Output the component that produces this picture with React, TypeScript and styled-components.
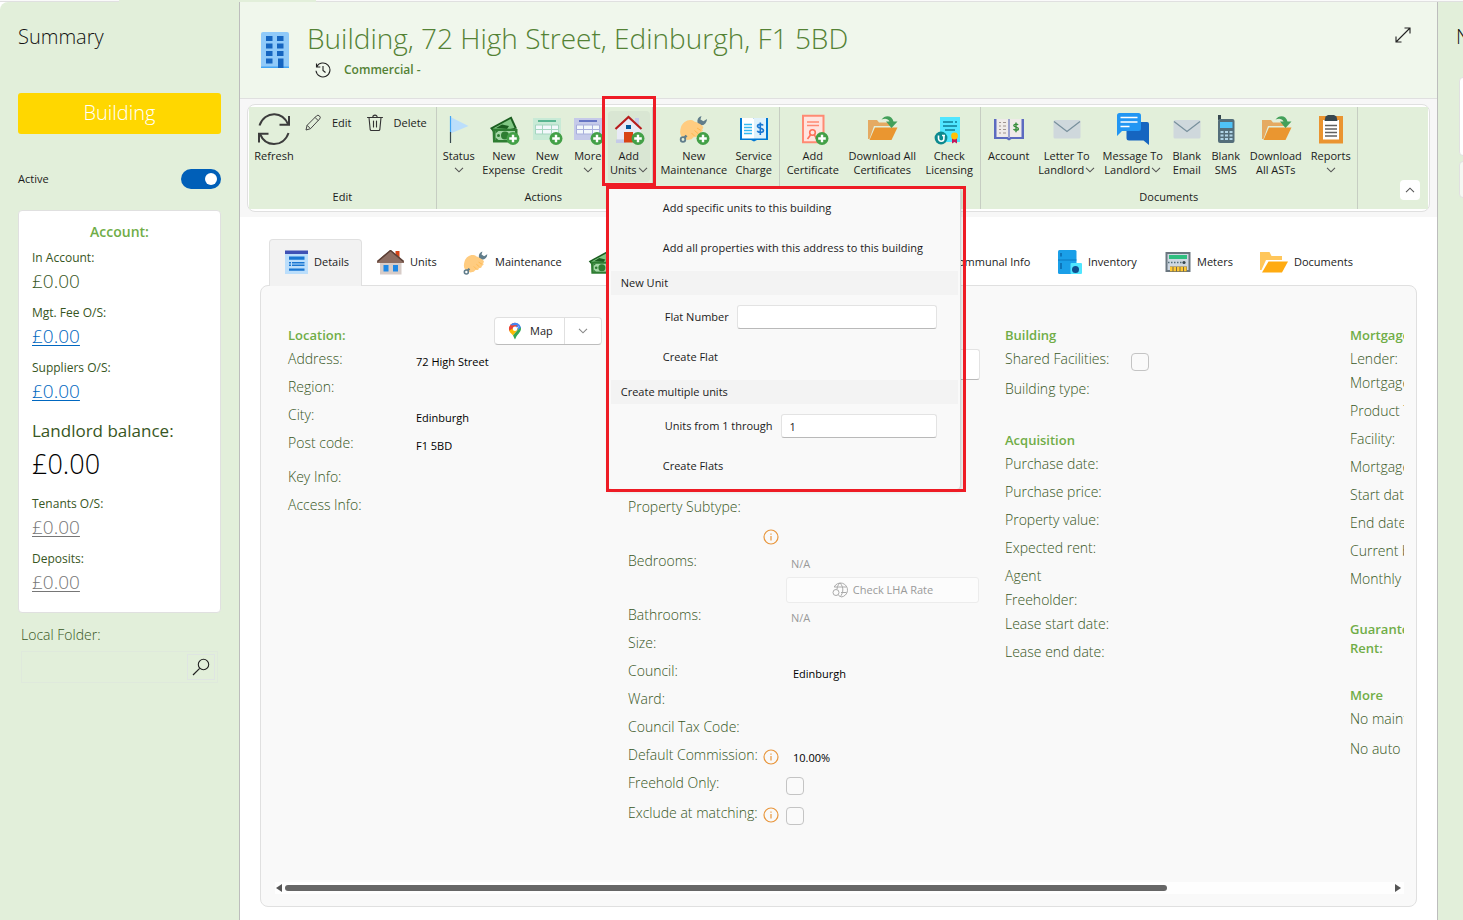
import React, { ReactNode } from 'react';
import styled, { createGlobalStyle, css } from 'styled-components';

const color = {
  pane: '#e2efda',
  header: '#f0f7ec',
  line: '#e0e0e0',
  divider: '#bdbdbd',
  text: '#1b1b1b',
  label: '#375623',
  heading: '#70ad47',
  title: '#548235',
  muted: '#9a9a9a',
  panel: '#f9f9f9',
  marker: '#ee1c25',
};

const GlobalStyle = createGlobalStyle`
  *, *::before, *::after { box-sizing: border-box; }
  body {
    margin: 0;
    background: #fff;
    color: ${color.text};
    font-family: 'Open Sans', 'Noto Sans', sans-serif;
    font-size: 11px;
    line-height: 14px;
  }
  button, input { font: inherit; color: inherit; }
  h1, h2, h3, p, dl, dd, dt { margin: 0; }
`;

/* ---------- icons ---------- */

const Svg = ({ size = 32, box = 32, children }: { size?: number; box?: number; children: ReactNode }) => (
  <svg width={size} height={size} viewBox={`0 0 ${box} ${box}`} fill="none" aria-hidden="true">
    {children}
  </svg>
);

const Chevron = ({ up = false, tone = '#555' }: { up?: boolean; tone?: string }) => (
  <svg width="10" height="6" viewBox="0 0 10 6" fill="none" aria-hidden="true">
    <path d={up ? 'M1 5.2 5 1.2l4 4' : 'M1 .8l4 4 4-4'} stroke={tone} strokeWidth="1.1" />
  </svg>
);

const Plus = () => (
  <g>
    <circle cx="25" cy="25.500" r="6.500" fill="#43a047" />
    <path d="M25 21.700v7.600M21.200 25.500h7.600" stroke="#fff" strokeWidth="2.400" />
  </g>
);

const RefreshIcon = () => (
  <Svg>
    <g stroke="#3c3c3c" strokeWidth="2">
      <path d="M1.500 12.500C4 5 10 1 16.500 1.200 22.500 1.400 27.500 5.500 30 11" />
      <path d="M31 3v8.800h-9.500" />
      <path d="M30.500 20C28 27.500 22 31 16 31 9.500 31 4.500 27 2 21" />
      <path d="M1 29.500V20.800h9.500" />
    </g>
  </Svg>
);

const PencilIcon = () => (
  <Svg size={18} box={18}>
    <path d="M2 16l1.100-4.700L12.400 2a2.100 2.100 0 0 1 3.100 0 2.100 2.100 0 0 1 0 3.100L6.500 14.700 2 16ZM11 3.400l3.300 3.300M3.100 11.300l3.300 3.300" stroke="#444" strokeWidth="1" strokeLinejoin="round" />
  </Svg>
);

const BinIcon = () => (
  <Svg size={18} box={18}>
    <path d="M1.500 3.500h15M3 3.500l1.200 12.200a1 1 0 0 0 1 .8h7.600a1 1 0 0 0 1-.8L15 3.500M6.800 3.300a2.200 2.200 0 0 1 4.400 0M7.500 7v6M10.500 7v6" stroke="#333" strokeWidth="1.100" strokeLinecap="round" />
  </Svg>
);

const FlagIcon = () => (
  <Svg>
    <path d="M7.500 4l18 9-18 7.500Z" fill="#bbdefb" />
    <path d="M7.500 3v16" stroke="#42a5f5" strokeWidth="1.200" />
    <path d="M7.500 19v11" stroke="#37474f" strokeWidth="1.200" />
  </Svg>
);

const Notes = () => (
  <g>
    <path d="M2 15 23.500 3.500l5.500 12L6 20Z" fill="#1b5e20" />
    <path d="M5 15.500 22.500 6l4 9L8 19Z" fill="#81c784" />
    <path d="M8 15l6-3.500 7 1.500-2 3Z" fill="#1b5e20" />
    <path d="M4.500 15.500 29.500 16v13.500H5Z" fill="#2e7d32" />
    <path d="M7.500 18h19.500v9H7.500Z" fill="#a5d6a7" />
    <circle cx="17" cy="22.500" r="4" fill="#2e7d32" />
    <circle cx="10.500" cy="22.500" r="1.500" fill="#2e7d32" />
    <circle cx="24" cy="22.500" r="1.500" fill="#2e7d32" />
    <path d="M7.500 18h3l-3 2.500ZM7.500 27h3l-3-2.500Z" fill="#2e7d32" />
  </g>
);

const ExpenseIcon = () => (
  <Svg>
    <Notes />
    <Plus />
  </Svg>
);

const MoneyIcon = () => (
  <Svg size={28}>
    <Notes />
  </Svg>
);

const FormIcon = ({ back, fore, edge }: { back: string; fore: string; edge: string }) => (
  <Svg>
    <path d="M2 5h28v22H2Z" fill={back} />
    <path d="M7 8h18" stroke={fore} strokeWidth="1.800" />
    <path d="M4.500 12h23v9h-23Z" fill="#f3f8fb" stroke={edge} />
    <path d="M4.500 16.500h23M11.500 12v9M20.500 12v9" stroke={edge} />
    <Plus />
  </Svg>
);

const AddUnitsIcon = () => (
  <Svg>
    <path d="M22 5h4v8h-4Z" fill="#c5cae9" />
    <path d="M4 15 15.500 5 28 15v11.500H4Z" fill="#e8eaf6" />
    <path d="M3 26.500h10V30H3Z" fill="#c5cae9" />
    <path d="M11 19h9v10.500h-9Z" fill="#d84315" />
    <path d="M13 12h5v4h-5Z" fill="#01579b" />
    <path d="M2.500 16 15.500 4l13 12" stroke="#b71c1c" strokeWidth="2.200" />
    <Plus />
  </Svg>
);

const HandWrench = () => (
  <g>
    <path d="M23.500 3a6 6 0 0 0-4 6.800l-3.500 4 3.500 2.700 3.500-4.200a6 6 0 0 0 6-6.300l-3.600 2.200-3-1.800Z" fill="#607d8b" />
    <path d="M3 14C4.500 9.500 9 6.500 13 7c2.500.2 3 1.800 5 2l3 1.500c3 1.500 5 3.500 4 5l-1 .5 1 1.500-2 2-1 2-2.500.5-1 2-3 .2-2 2-4 .8-6-3.500C1.500 20.500 2 17.500 3 14Z" fill="#ffcc80" />
    <path d="M19 15l4 2.500M16.500 17.500l3.500 3M13.500 20l3 3" stroke="#ffb74d" strokeWidth="1" />
    <circle cx="5" cy="26.500" r="2.300" stroke="#607d8b" strokeWidth="1.800" />
    <path d="M6.500 24.800 8.500 22.500" stroke="#607d8b" strokeWidth="2.500" />
  </g>
);

const NewMaintenanceIcon = () => (
  <Svg>
    <HandWrench />
    <Plus />
  </Svg>
);

const ServiceChargeIcon = () => (
  <Svg>
    <path d="M2 5h28v22H19l-3 1.500L13 27H2Z" fill="#0078d4" />
    <path d="M4 5h11c1 0 1 1 1 1v19.500H4Z" fill="#fff" />
    <path d="M16 5h12v20.500H16Z" fill="#dff1fb" />
    <path d="M6 11.500h8M6 14.500h8M6 17.500h8M6 20.500h8" stroke="#35b8f1" strokeWidth="1.400" />
    <path d="M25 12.500c-.5-1.500-5.500-1.700-5.500.8 0 2.500 6 1.400 6 4.200 0 2.500-5.500 2.500-6.200.2M22.300 9.500v12.500" stroke="#1976d2" strokeWidth="1.600" />
  </Svg>
);

const CertificateIcon = () => (
  <Svg>
    <path d="M6 2.800h20.500v26.400H6Z" fill="#ffe4df" stroke="#ff8a73" strokeWidth="2" />
    <path d="M10 9h12M10 12.500h12" stroke="#ff8a73" strokeWidth="1.600" />
    <circle cx="15.500" cy="19.500" r="2.800" stroke="#ff7058" strokeWidth="1.600" />
    <path d="M13.500 22l-3 4M17.500 22l2 4" stroke="#ff7058" strokeWidth="1.600" />
    <Plus />
  </Svg>
);

const DownloadFolderIcon = () => (
  <Svg>
    <path d="M2 7h9l2 2.500h12V13H8L3.500 26 2 26Z" fill="#e5aa62" />
    <path d="M9 14.500h22.500L25.500 27H3.500Z" fill="#ea9630" />
    <path d="M15.500 6.500C19 1.500 26 2 27.500 8.500h4L25.500 15 20 8.500h3.500C22 5.500 19 5 15.500 6.500Z" fill="#43a05a" />
  </Svg>
);

const LicensingIcon = () => (
  <Svg>
    <path d="M7 4h20v25H7Z" fill="#50e6ff" />
    <path d="M10 9h10M22 9h2M10 13h14M12 17h10" stroke="#0f7d97" strokeWidth="1.400" />
    <circle cx="8" cy="25" r="6.400" fill="#0d8a8f" />
    <path d="M5.500 22.500v3a2.700 2.700 0 0 0 5.400 0V22M9 22.500h3" stroke="#fff" strokeWidth="1.600" />
    <path d="M19 24h5v6.500l-2.500-1.500-2.500 1.500Z" fill="#c2185b" />
    <circle cx="21.500" cy="23" r="3.400" fill="#ffc107" />
  </Svg>
);

const AccountIcon = () => (
  <Svg>
    <path d="M1 6h3v18h24V6h3v20H18.500L16 27.500 13.500 26H1Z" fill="#5c6bc0" />
    <path d="M3.500 6H15v18H3.500ZM17 6h11.500v18H17Z" fill="#efebe9" />
    <path d="M15 6h2v19h-2Z" fill="#9aa0cf" />
    <path d="M6 9.500h2M10 9.500h3M6 13h2M10 13h3M6 16.500h2M10 16.500h3M6 20h2M10 20h3" stroke="#a09490" strokeWidth="1.200" />
    <path d="M25 12c-.5-1.300-4.200-1.300-4.200.6 0 2 4.600 1 4.600 3.100 0 2-4.200 1.900-4.800.2M23 9.500v9.700" stroke="#388e3c" strokeWidth="1.400" />
  </Svg>
);

const EnvelopeIcon = () => (
  <Svg>
    <rect x="2.500" y="7" width="27" height="18.500" rx="1.500" fill="#cfd8dc" />
    <path d="M3 8.500 16 18.500l13-10" stroke="#78909c" strokeWidth="1.300" />
  </Svg>
);

const MessageIcon = () => (
  <Svg>
    <path d="M12 9h18a2 2 0 0 1 2 2v21l-5.500-4.500H12a2.500 2.500 0 0 1-2.500-2.500V11Z" fill="#1565c0" />
    <path d="M2.500 0h19A2.500 2.500 0 0 1 24 2.500v13a2.500 2.500 0 0 1-2.500 2.500H5l-5 5V2.500A2.500 2.500 0 0 1 2.500 0Z" fill="#2196f3" />
    <path d="M3.500 4.500h17M3.500 9h17M3.500 13.500h9" stroke="#fff" strokeWidth="1.600" />
  </Svg>
);

const PhoneIcon = () => (
  <Svg>
    <path d="M8 2h3v5H8Z" fill="#37474f" />
    <rect x="8" y="6" width="16.500" height="24" rx="2" fill="#546e7a" />
    <path d="M10 9h12.500v6H10Z" fill="#4fc3f7" />
    <path d="M10.500 19h12M10.500 22.500h12M10.500 26h12" stroke="#b0d4e6" strokeWidth="1.900" strokeDasharray="3 1.500" />
  </Svg>
);

const ReportsIcon = () => (
  <Svg>
    <path d="M4 3h24v27.500H4Z" fill="#ea9430" />
    <path d="M8 7h16v19.500H8Z" fill="#fff" />
    <path d="M10.500 3.500 13 2h6l2.500 1.500 1 4.500h-13Z" fill="#37474f" />
    <path d="M10 12.500h12M10 16h12M10 19.500h12M10 23h12" stroke="#616161" strokeWidth="1.500" />
  </Svg>
);

const BuildingIcon = () => (
  <svg width="28" height="36" viewBox="0 0 28 36" aria-hidden="true">
    <rect x="0" y="0" width="28" height="36" rx="2" fill="#90caf9" />
    <path d="M0 34.500h28V36H0Z" fill="#42a5f5" />
    <path d="M5 4h6.500v5H5ZM16 4h6.500v5H16ZM5 11.500h6.500v5H5ZM16 11.500h6.500v5H16ZM5 19h6.500v5H5ZM16 19h6.500v5H16ZM5 26.500h6.500v5H5ZM17 26.500h5.500V36H17Z" fill="#1565c0" />
  </svg>
);

const HistoryIcon = () => (
  <Svg size={16} box={16}>
    <path d="M1.500 1.500V5h3.800M1.700 4.800A7 7 0 1 1 1 8.800M8 4v4.500l2.500 2" stroke="#222" strokeWidth="1.100" />
  </Svg>
);

const ExpandIcon = () => (
  <Svg size={16} box={16}>
    <path d="M1 15 15 1M9.500 1H15v5.500M1 9.500V15h5.500" stroke="#222" strokeWidth="1.100" />
  </Svg>
);

const SearchIcon = () => (
  <Svg size={18} box={18}>
    <circle cx="11.500" cy="6.500" r="5.200" stroke="#222" strokeWidth="1.100" />
    <path d="M7.700 10.300 1 17" stroke="#222" strokeWidth="1.200" />
  </Svg>
);

const DetailsIcon = () => (
  <Svg size={24} box={24}>
    <path d="M1 1h23v23H1Z" fill="#bbdefb" />
    <path d="M1 .500h23V4H1Z" fill="#3f51b5" />
    <path d="M5 6.500h15.500v3.300H5ZM5 12h2v1.500H5ZM8 12h12.500v1.500H8ZM5 14.500h2V16H5ZM8 14.500h12.500V16H8ZM5 18.500h15.500v2.200H5Z" fill="#1976d2" />
  </Svg>
);

const UnitsIcon = () => (
  <Svg size={27} box={27}>
    <path d="M18.500 2h4v7h-4Z" fill="#d84315" />
    <path d="M3 12 13.500 3 24.500 12v13.500H3Z" fill="#d7ccc8" />
    <path d="M13.500 1 0 12v2h27v-2Z" fill="#8d6e63" />
    <path d="M13.500 1.500 .5 12.500M13.500 1.500l13 11" stroke="#5d4037" strokeWidth="1.600" />
    <path d="M6.500 16h5v6.500h-5ZM16 16h5v6.500h-5Z" fill="#1e88e5" />
  </Svg>
);

const MaintenanceIcon = () => (
  <Svg size={27} box={31}>
    <HandWrench />
  </Svg>
);

const InventoryIcon = () => (
  <Svg size={24} box={24}>
    <rect x="0" y="0" width="18.500" height="24" rx="1.500" fill="#1a9fe8" />
    <path d="M0 10h18.500" stroke="#0a78c0" />
    <path d="M3 3v3.500M3 13v6" stroke="#055a9c" strokeWidth="1.200" />
    <rect x="12.500" y="13" width="11.500" height="11" rx="1" fill="#50e6ff" />
    <circle cx="17.500" cy="19.500" r="3.500" fill="#0f4f8f" />
  </Svg>
);

const MetersIcon = () => (
  <Svg size={26} box={26}>
    <path d="M.5 3h25v20H.5Z" fill="#6b7780" />
    <path d="M2.500 5h21v16h-21Z" fill="#cfd8e2" />
    <path d="M4 6h18v4H4Z" fill="#2fbf80" />
    <path d="M3 13.500h14" stroke="#546e7a" strokeWidth="1.400" strokeDasharray="1.500 1.500" />
    <circle cx="19" cy="13.500" r="1.600" fill="#37474f" />
    <path d="M5 17.500h17v5H5Z" fill="#7b6a45" />
    <path d="M5 20h17" stroke="#ffc933" strokeWidth="4.500" strokeDasharray="2.500 1" />
  </Svg>
);

const DocumentsIcon = () => (
  <Svg size={28} box={28}>
    <path d="M0 4h9.500l2 4H22v4H6L1.500 22H0Z" fill="#ffc65a" />
    <path d="M8.500 13.500H28L22 24.500H2Z" fill="#ffab12" />
  </Svg>
);

const MapPinIcon = () => (
  <Svg size={18} box={18}>
    <path d="M9 .8a6 6 0 0 0-6 6c0 .6 0 1.300.3 1.900L12 2Z" fill="#ea4335" />
    <path d="M4.500 2.700A6 6 0 0 1 13.700 3L9.500 7.500Z" fill="#4285f4" />
    <path d="M3.100 5.500c-.4 2 .2 3.500 1.400 5l7-7.500-7 .5Z" fill="#ea4335" />
    <path d="M3.300 8.500c.6 2 2.400 3.400 3.700 5l6-7-4-1Z" fill="#fbbc04" />
    <path d="M14.600 4.500c1.200 3.500-.6 5.500-2.500 7.700C10.500 14 9.900 15.500 9 17.500c-.9-1.500-1.200-2.800-2-4Z" fill="#34a853" />
    <path d="M13.300 2.600a6 6 0 0 1 1.500 3.200L11 8.500Z" fill="#4285f4" />
    <circle cx="9" cy="6.700" r="2.200" fill="#fff" />
  </Svg>
);

const GlobeSearchIcon = () => (
  <Svg size={16} box={16}>
    <path d="M2.200 5A7 7 0 1 1 9 15M8 1C5.500 3 5 6 5.100 7M8 1c4 4 3.500 10 0 14M2.200 5h12M9 10.500h5.500" stroke="#aaa" strokeWidth="1" />
    <circle cx="4" cy="10.500" r="3" stroke="#aaa" />
    <path d="M6.200 12.700 8.500 15" stroke="#aaa" />
  </Svg>
);

const InfoIcon = () => (
  <Svg size={16} box={16}>
    <circle cx="8" cy="8" r="7" stroke="#e8963c" strokeWidth="1.200" />
    <path d="M8 7v4.500M8 4.500v1.300" stroke="#e8963c" strokeWidth="1.200" />
  </Svg>
);

/* ---------- page frame ---------- */

const Page = styled.div`
  display: flex;
  flex-direction: column;
  min-height: 100vh;
`;

const TabStrip = styled.div`
  display: grid;
  grid-template-columns: 119px 197px 1fr;
  height: 2px;
  background: #fafafa;
`;

const StripCell = styled.div<{ $active?: boolean }>`
  background: ${(p) => (p.$active ? color.pane : 'transparent')};
  border-bottom: 1px solid ${(p) => (p.$active ? color.pane : color.line)};
`;

const Body = styled.div`
  flex: 1;
  display: grid;
  grid-template-columns: 240px minmax(0, 1fr) 26px;
`;

/* ---------- summary pane ---------- */

const Summary = styled.aside`
  display: flex;
  flex-direction: column;
  padding: 20px 18px 0;
  background: ${color.pane};
  border-right: 1px solid ${color.divider};
  border-top-left-radius: 8px;
`;

const PaneTitle = styled.h2`
  font-size: 20px;
  line-height: 30px;
  font-weight: 300;
  color: #111;
`;

const TypeButton = styled.button`
  height: 41px;
  margin-top: 41px;
  padding: 0 0 2px;
  border: 0;
  border-radius: 3px;
  background: #ffd700;
  color: #fff;
  font-size: 20px;
  line-height: 30px;
  font-weight: 300;
`;

const ActiveRow = styled.label`
  display: flex;
  align-items: center;
  justify-content: space-between;
  height: 20px;
  margin-top: 35px;
`;

const Toggle = styled.input`
  appearance: none;
  display: flex;
  align-items: center;
  justify-content: flex-end;
  width: 40px;
  height: 20px;
  margin: 0;
  padding: 0 4px;
  border-radius: 10px;
  background: #005fb8;
  &::before {
    content: '';
    width: 12px;
    height: 12px;
    border-radius: 50%;
    background: #fff;
  }
`;

const AccountCard = styled.section`
  margin: 21px 0 12px;
  padding: 11px 13px 8px;
  background: #fff;
  border: 1px solid ${color.line};
  border-radius: 4px;
`;

const CardHeading = styled.h3`
  margin-bottom: 6px;
  font-size: 14px;
  line-height: 20px;
  font-weight: 600;
  text-align: center;
  color: ${color.heading};
`;

const Balance = styled.div<{ $large?: boolean }>`
  margin-bottom: ${(p) => (p.$large ? 12 : 8)}px;
  padding-top: ${(p) => (p.$large ? 3 : 0)}px;
`;

const BalanceLabel = styled.dt<{ $large?: boolean }>`
  font-size: ${(p) => (p.$large ? 17 : 12)}px;
  line-height: ${(p) => (p.$large ? 30 : 20)}px;
  color: ${color.label};
`;

const BalanceValue = styled.dd<{ $large?: boolean }>`
  font-size: ${(p) => (p.$large ? 27 : 19)}px;
  line-height: ${(p) => (p.$large ? 36 : 27)}px;
  font-weight: 300;
  color: ${(p) => (p.$large ? '#000' : color.label)};
`;

const BalanceLink = styled.a<{ $muted?: boolean }>`
  color: ${(p) => (p.$muted ? '#767676' : '#0067c0')};
  text-decoration-thickness: 1px;
  text-underline-offset: 2px;
`;

const FolderLabel = styled.label`
  padding-left: 3px;
  font-size: 14px;
  line-height: 20px;
  font-weight: 300;
  color: ${color.label};
`;

const FolderBox = styled.div`
  display: flex;
  align-items: center;
  height: 32px;
  margin: 6px 3px 0;
  padding: 0 2px;
  border: 1px solid #dfe9dc;
`;

const FolderInput = styled.input`
  flex: 1;
  min-width: 0;
  border: 0;
  background: transparent;
`;

const FolderButton = styled.button`
  display: grid;
  place-items: center;
  width: 28px;
  height: 26px;
  padding: 0;
  border: 1px solid #dfe5e2;
  background: transparent;
`;

/* ---------- main header ---------- */

const Main = styled.main`
  display: flex;
  flex-direction: column;
  background: #fff;
`;

const Header = styled.header`
  display: flex;
  align-items: flex-start;
  height: 97px;
  padding: 16px 26px 0 21px;
  background: ${color.header};
  border-bottom: 1px solid ${color.line};
`;

const HeaderIcon = styled.div`
  margin-top: 14px;
  line-height: 0;
`;

const HeaderText = styled.div`
  flex: 1;
  padding-left: 18px;
`;

const Title = styled.h1`
  font-size: 28px;
  line-height: 40px;
  font-weight: 300;
  white-space: nowrap;
  color: ${color.title};
`;

const Subtitle = styled.p`
  display: flex;
  align-items: center;
  gap: 13px;
  height: 24px;
  padding-left: 8px;
  font-size: 12px;
  font-weight: 600;
  color: ${color.title};
`;

const PlainButton = styled.button`
  display: flex;
  align-items: center;
  padding: 0;
  border: 0;
  background: transparent;
`;

const ExpandButton = styled(PlainButton)`
  margin-top: 9px;
`;

/* ---------- ribbon ---------- */

const RibbonShell = styled.div`
  padding: 5px 7px;
  background: #f7f7f7;
`;

const RibbonBox = styled.div`
  padding: 2px 1px;
  background: #fff;
  border: 1px solid ${color.line};
  border-radius: 8px;
`;

const RibbonBar = styled.div`
  display: flex;
  height: 102px;
  background: ${color.pane};
`;

const Group = styled.section<{ $end?: number }>`
  display: flex;
  flex-direction: column;
  justify-content: space-between;
  padding-right: ${(p) => p.$end ?? 0}px;
  border-right: 1px solid #c6cdc2;
`;

const GroupItems = styled.div`
  display: flex;
  align-items: flex-start;
  padding-top: 4px;
`;

const GroupName = styled.div`
  height: 22px;
  line-height: 20px;
  text-align: center;
`;

const BigButton = styled.button<{ $width: number; $open?: boolean }>`
  display: flex;
  flex-direction: column;
  align-items: center;
  width: ${(p) => p.$width}px;
  height: 71px;
  padding: 2px 0 0;
  border: 0;
  border-radius: 4px;
  background: ${(p) => (p.$open ? '#d9e6d3' : 'transparent')};
  white-space: nowrap;
`;

const BigLabel = styled.span`
  margin-top: 4px;
  line-height: 14px;
`;

const LabelLine = styled.span`
  display: flex;
  align-items: center;
  justify-content: center;
  gap: 1px;
  height: 14px;
`;

const SmallButton = styled.button`
  display: flex;
  align-items: center;
  gap: 10px;
  height: 24px;
  padding: 0 9px 0 5px;
  border: 0;
  background: transparent;
`;

const CollapseButton = styled.button`
  display: grid;
  place-items: center;
  align-self: flex-end;
  width: 20px;
  height: 20px;
  margin: 0 8px 9px auto;
  padding: 0;
  border: 0;
  border-radius: 4px;
  background: #fff;
`;

const MenuAnchor = styled.div`
  position: relative;
`;

const marked = css`
  &::after {
    content: '';
    position: absolute;
    border: 3px solid ${color.marker};
    pointer-events: none;
  }
`;

const MarkedAnchor = styled(MenuAnchor)`
  ${marked}
  &::after { inset: -15px -6px -4px; z-index: 6; }
`;

const Menu = styled.div`
  ${marked}
  position: absolute;
  z-index: 5;
  top: 77px;
  left: 0;
  width: 353px;
  height: 301px;
  padding: 0 2px 0 3px;
  background: ${color.panel};
  border-right: 1px solid #d4d4d4;
  border-radius: 0 0 4px 4px;
  box-shadow: 1px 2px 4px rgba(0, 0, 0, 0.16);
  &::after { inset: -2px -6px -3px -2px; }
`;

const MenuRow = styled.div`
  display: flex;
  align-items: center;
  gap: 8px;
  height: 40px;
  padding: 0 21px 0 54px;
`;

const MenuItem = styled.button`
  display: block;
  width: 100%;
  height: 40px;
  padding: 0 0 0 52px;
  border: 0;
  background: transparent;
  text-align: left;
  white-space: nowrap;
`;

const MenuHeading = styled.div`
  height: 24px;
  margin: 3px 0 2px;
  padding-left: 10px;
  line-height: 24px;
  background: #f3f3f3;
`;

const TextBox = styled.input`
  flex: 1;
  min-width: 0;
  height: 24px;
  padding: 0 8px;
  border: 1px solid #e3e3e3;
  border-bottom-color: #b9b9b9;
  border-radius: 3px;
  background: #fff;
`;

/* ---------- tabs and details ---------- */

const Tabs = styled.nav`
  display: flex;
  padding: 22px 0 0 29px;
`;

const Tab = styled.button<{ $width: number; $active?: boolean }>`
  display: flex;
  align-items: center;
  gap: 6px;
  flex: none;
  width: ${(p) => p.$width}px;
  height: 47px;
  margin-bottom: -1px;
  padding: 0 0 2px 14px;
  border: 1px solid ${(p) => (p.$active ? color.line : 'transparent')};
  border-bottom: 0;
  border-radius: 4px 4px 0 0;
  background: ${(p) => (p.$active ? '#f2f2f2' : 'transparent')};
  position: relative;
  white-space: nowrap;
`;

const Panel = styled.section`
  flex: 1;
  display: flex;
  flex-direction: column;
  margin: 0 20px 13px;
  padding: 39px 12px 12px 14px;
  background: ${color.panel};
  border: 1px solid ${color.line};
  border-radius: 8px;
`;

const Columns = styled.div`
  flex: 1;
  display: grid;
  grid-template-columns: 340px 377px 345px 200px;
  margin-top: -10px;
  padding: 10px 0 0 13px;
  overflow: hidden;
`;

const Section = styled.section`
  display: flow-root;
  margin-bottom: 23px;
`;

const SectionHead = styled.div<{ $double?: boolean }>`
  display: flex;
  align-items: flex-end;
  justify-content: space-between;
  height: ${(p) => (p.$double ? 38 : 20)}px;
  margin-bottom: 4px;
  padding-right: 26px;
`;

const SectionTitle = styled.h3`
  font-size: 13px;
  line-height: 19px;
  font-weight: 600;
  color: ${color.heading};
`;

const Row = styled.div<{ $height?: number; $label?: number }>`
  display: grid;
  grid-template-columns: ${(p) => p.$label ?? 128}px 1fr;
  align-items: start;
  height: ${(p) => p.$height ?? 28}px;
`;

const RowLabel = styled.label`
  font-size: 14px;
  line-height: 20px;
  font-weight: 300;
  white-space: nowrap;
  color: ${color.label};
`;

const LabelCell = styled.div`
  display: flex;
  align-items: flex-start;
  justify-content: space-between;
  padding-right: 7px;
  & > svg { margin-top: 4px; }
`;

const RowValue = styled.span<{ $muted?: boolean }>`
  padding-left: ${(p) => (p.$muted ? 5 : 7)}px;
  line-height: 26px;
  color: ${(p) => (p.$muted ? color.muted : '#000')};
`;

const PlainValue = styled.span`
  line-height: 26px;
  color: #000;
`;

const ValueStack = styled.div`
  display: flex;
  flex-direction: column;
`;

const Check = styled.input`
  appearance: none;
  width: 18px;
  height: 18px;
  margin: 4px 0 0;
  border: 1px solid #c4c4c4;
  border-radius: 4px;
  background: #fafafa;
`;

const PropertyInput = styled(TextBox)`
  width: 194px;
  height: 31px;
`;

const RateButton = styled.button`
  display: flex;
  align-items: center;
  justify-content: center;
  gap: 5px;
  width: 193px;
  height: 26px;
  padding: 0;
  border: 1px solid #ececec;
  border-radius: 3px;
  background: #fcfcfc;
  color: ${color.muted};
`;

const SplitButton = styled.div`
  flex: none;
  display: flex;
  width: 108px;
  height: 28px;
  background: #fff;
  border: 1px solid ${color.line};
  border-bottom-color: #bdbdbd;
  border-radius: 4px;
`;

const MapButton = styled(PlainButton)`
  gap: 6px;
  width: 70px;
  padding-left: 11px;
  border-right: 1px solid ${color.line};
`;

const MapMenuButton = styled(PlainButton)`
  flex: 1;
  justify-content: center;
`;

const ScrollTrack = styled.div`
  display: flex;
  align-items: center;
  justify-content: space-between;
  height: 12px;
  padding: 0 3px 0 1px;
  background: #fefefe;
`;

const ScrollRail = styled.div`
  flex: 1;
  margin: 0 8px 0 3px;
`;

const ScrollThumb = styled.div`
  width: 80%;
  height: 6px;
  border-radius: 3px;
  background: #666;
`;

const ScrollArrow = styled.span<{ $left?: boolean }>`
  border: 4px solid transparent;
  ${(p) => (p.$left ? 'border-left: 0; border-right: 6px solid #555;' : 'border-right: 0; border-left: 6px solid #555;')}
`;

/* ---------- right pane ---------- */

const SidePane = styled.aside`
  padding: 20px 0 0 18px;
  overflow: hidden;
  background: ${color.pane};
  border-left: 1px solid ${color.divider};
`;

const SideCard = styled.div<{ $height: number; $soft?: boolean }>`
  width: 60px;
  height: ${(p) => p.$height}px;
  margin: 0 0 5px 3px;
  background: ${(p) => (p.$soft ? '#f5f8f3' : '#fff')};
  border: 1px solid ${color.line};
  border-radius: 4px;
`;

const SideHead = styled(PaneTitle)`
  margin-bottom: 25px;
`;

/* ---------- data ---------- */

type RibbonAction = { lines: string[]; icon: ReactNode; width: number; chevron?: boolean };

const actions: RibbonAction[] = [
  { lines: ['Status', ''], icon: <FlagIcon />, width: 44, chevron: true },
  { lines: ['New', 'Expense'], icon: <ExpenseIcon />, width: 46 },
  { lines: ['New', 'Credit'], icon: <FormIcon back="#c8ead6" fore="#4caf8a" edge="#a5d6c0" />, width: 41 },
  { lines: ['More', ''], icon: <FormIcon back="#c5cae9" fore="#5c6bc0" edge="#a8afdc" />, width: 40, chevron: true },
];

const upkeep: RibbonAction[] = [
  { lines: ['New', 'Maintenance'], icon: <NewMaintenanceIcon />, width: 82 },
  { lines: ['Service', 'Charge'], icon: <ServiceChargeIcon />, width: 38 },
];

const certificates: RibbonAction[] = [
  { lines: ['Add', 'Certificate'], icon: <CertificateIcon />, width: 66 },
  { lines: ['Download All', 'Certificates'], icon: <DownloadFolderIcon />, width: 73 },
  { lines: ['Check', 'Licensing'], icon: <LicensingIcon />, width: 61 },
];

const documents: RibbonAction[] = [
  { lines: ['Account', ''], icon: <AccountIcon />, width: 56 },
  { lines: ['Letter To', 'Landlord'], icon: <EnvelopeIcon />, width: 60, chevron: true },
  { lines: ['Message To', 'Landlord'], icon: <MessageIcon />, width: 72, chevron: true },
  { lines: ['Blank', 'Email'], icon: <EnvelopeIcon />, width: 36 },
  { lines: ['Blank', 'SMS'], icon: <PhoneIcon />, width: 42 },
  { lines: ['Download', 'All ASTs'], icon: <DownloadFolderIcon />, width: 58 },
  { lines: ['Reports', ''], icon: <ReportsIcon />, width: 52, chevron: true },
];

const RibbonButton = ({ lines, icon, width, chevron, open }: RibbonAction & { open?: boolean }) => (
  <BigButton type="button" $width={width} $open={open}>
    {icon}
    <BigLabel>
      <LabelLine>{lines[0]}</LabelLine>
      <LabelLine>
        {lines[1]}
        {chevron && <Chevron />}
      </LabelLine>
    </BigLabel>
  </BigButton>
);

const tabs = [
  { name: 'Details', icon: <DetailsIcon />, width: 93 },
  { name: 'Units', icon: <UnitsIcon />, width: 85 },
  { name: 'Maintenance', icon: <MaintenanceIcon />, width: 125 },
  { name: 'Expenses', icon: <MoneyIcon />, width: 331 },
  { name: 'Communal Info', icon: <UnitsIcon />, width: 140 },
  { name: 'Inventory', icon: <InventoryIcon />, width: 107 },
  { name: 'Meters', icon: <MetersIcon />, width: 95 },
  { name: 'Documents', icon: <DocumentsIcon />, width: 110 },
];

const MoneyRow = ({ label, kind, large }: { label: string; kind?: 'link' | 'muted'; large?: boolean }) => (
  <Balance $large={large}>
    <BalanceLabel $large={large}>{label}</BalanceLabel>
    <BalanceValue $large={large}>
      {kind ? (
        <BalanceLink href="#" $muted={kind === 'muted'}>
          £0.00
        </BalanceLink>
      ) : (
        '£0.00'
      )}
    </BalanceValue>
  </Balance>
);

const Field = ({ label, value, height }: { label: string; value?: string; height?: number }) => (
  <Row $height={height}>
    <RowLabel as="span">{label}</RowLabel>
    {value && <PlainValue>{value}</PlainValue>}
  </Row>
);

const PropertyField = ({
  label,
  height,
  info,
  htmlFor,
  children,
}: {
  label?: string;
  height?: number;
  info?: boolean;
  htmlFor?: string;
  children?: ReactNode;
}) => (
  <Row $height={height} $label={158}>
    <LabelCell>
      <RowLabel as={htmlFor ? 'label' : 'span'} htmlFor={htmlFor}>
        {label}
      </RowLabel>
      {info && <InfoIcon />}
    </LabelCell>
    {children}
  </Row>
);

export default function App() {
  return (
    <>
      <GlobalStyle />
      <Page>
        <TabStrip>
          <StripCell />
          <StripCell $active />
          <StripCell />
        </TabStrip>
        <Body>
          <Summary>
            <PaneTitle>Summary</PaneTitle>
            <TypeButton type="button">Building</TypeButton>
            <ActiveRow>
              Active
              <Toggle type="checkbox" role="switch" defaultChecked />
            </ActiveRow>
            <AccountCard>
              <CardHeading>Account:</CardHeading>
              <dl>
                <MoneyRow label="In Account:" />
                <MoneyRow label="Mgt. Fee O/S:" kind="link" />
                <MoneyRow label="Suppliers O/S:" kind="link" />
                <MoneyRow label="Landlord balance:" large />
                <MoneyRow label="Tenants O/S:" kind="muted" />
                <MoneyRow label="Deposits:" kind="muted" />
              </dl>
            </AccountCard>
            <FolderLabel htmlFor="folder">Local Folder:</FolderLabel>
            <FolderBox>
              <FolderInput id="folder" type="text" />
              <FolderButton type="button" aria-label="Browse">
                <SearchIcon />
              </FolderButton>
            </FolderBox>
          </Summary>

          <Main>
            <Header>
              <HeaderIcon>
                <BuildingIcon />
              </HeaderIcon>
              <HeaderText>
                <Title>Building, 72 High Street, Edinburgh, F1 5BD</Title>
                <Subtitle>
                  <HistoryIcon />
                  Commercial -
                </Subtitle>
              </HeaderText>
              <ExpandButton type="button" aria-label="Expand">
                <ExpandIcon />
              </ExpandButton>
            </Header>

            <RibbonShell>
              <RibbonBox>
                <RibbonBar>
                  <Group>
                    <GroupItems>
                      <RibbonButton lines={['Refresh', '']} icon={<RefreshIcon />} width={50} />
                      <SmallButton type="button">
                        <PencilIcon />
                        Edit
                      </SmallButton>
                      <SmallButton type="button">
                        <BinIcon />
                        Delete
                      </SmallButton>
                    </GroupItems>
                    <GroupName>Edit</GroupName>
                  </Group>
                  <Group $end={2}>
                    <GroupItems>
                      {actions.map((a) => (
                        <RibbonButton key={a.lines.join()} {...a} />
                      ))}
                      <MarkedAnchor>
                        <RibbonButton lines={['Add', 'Units']} icon={<AddUnitsIcon />} width={42} chevron open />
                        <Menu>
                          <MenuItem type="button">Add specific units to this building</MenuItem>
                          <MenuItem type="button">Add all properties with this address to this building</MenuItem>
                          <MenuHeading>New Unit</MenuHeading>
                          <MenuRow>
                            <label htmlFor="flat">Flat Number</label>
                            <TextBox id="flat" type="text" />
                          </MenuRow>
                          <MenuItem type="button">Create Flat</MenuItem>
                          <MenuHeading>Create multiple units</MenuHeading>
                          <MenuRow>
                            <label htmlFor="through">Units from 1 through</label>
                            <TextBox id="through" type="text" defaultValue="1" />
                          </MenuRow>
                          <MenuItem type="button">Create Flats</MenuItem>
                        </Menu>
                      </MarkedAnchor>
                    </GroupItems>
                    <GroupName>Actions</GroupName>
                  </Group>
                  <Group $end={6}>
                    <GroupItems>
                      {upkeep.map((a) => (
                        <RibbonButton key={a.lines.join()} {...a} />
                      ))}
                    </GroupItems>
                  </Group>
                  <Group>
                    <GroupItems>
                      {certificates.map((a) => (
                        <RibbonButton key={a.lines.join()} {...a} />
                      ))}
                    </GroupItems>
                  </Group>
                  <Group>
                    <GroupItems>
                      {documents.map((a) => (
                        <RibbonButton key={a.lines.join()} {...a} />
                      ))}
                    </GroupItems>
                    <GroupName>Documents</GroupName>
                  </Group>
                  <CollapseButton type="button" aria-label="Collapse ribbon">
                    <Chevron up />
                  </CollapseButton>
                </RibbonBar>
              </RibbonBox>
            </RibbonShell>

            <Tabs>
              {tabs.map((t, i) => (
                <Tab key={t.name} type="button" $width={t.width} $active={i === 0}>
                  {t.icon}
                  {t.name}
                </Tab>
              ))}
            </Tabs>

            <Panel>
              <Columns>
                <div>
                  <Section>
                    <SectionHead>
                      <SectionTitle>Location:</SectionTitle>
                      <SplitButton>
                        <MapButton type="button">
                          <MapPinIcon />
                          Map
                        </MapButton>
                        <MapMenuButton type="button" aria-label="Map options">
                          <Chevron tone="#888" />
                        </MapMenuButton>
                      </SplitButton>
                    </SectionHead>
                    <Field label="Address:" value="72 High Street" />
                    <Field label="Region:" />
                    <Field label="City:" value="Edinburgh" />
                    <Field label="Post code:" value="F1 5BD" height={34} />
                    <Field label="Key Info:" />
                    <Field label="Access Info:" />
                  </Section>
                </div>

                <div>
                  <Section>
                    <SectionHead />
                    <PropertyField height={148}>
                      <PropertyInput type="text" aria-label="Property type" />
                    </PropertyField>
                    <PropertyField label="Property Subtype:" />
                    <PropertyField height={26} info />
                    <PropertyField label="Bedrooms:" height={54}>
                      <ValueStack>
                        <RowValue $muted>N/A</RowValue>
                        <RateButton type="button" disabled>
                          <GlobeSearchIcon />
                          Check LHA Rate
                        </RateButton>
                      </ValueStack>
                    </PropertyField>
                    <PropertyField label="Bathrooms:">
                      <RowValue $muted>N/A</RowValue>
                    </PropertyField>
                    <PropertyField label="Size:" />
                    <PropertyField label="Council:">
                      <RowValue>Edinburgh</RowValue>
                    </PropertyField>
                    <PropertyField label="Ward:" />
                    <PropertyField label="Council Tax Code:" />
                    <PropertyField label="Default Commission:" info>
                      <RowValue>10.00%</RowValue>
                    </PropertyField>
                    <PropertyField label="Freehold Only:" height={30} htmlFor="freehold">
                      <Check id="freehold" type="checkbox" />
                    </PropertyField>
                    <PropertyField label="Exclude at matching:" info htmlFor="exclude">
                      <Check id="exclude" type="checkbox" />
                    </PropertyField>
                  </Section>
                </div>

                <div>
                  <Section>
                    <SectionHead>
                      <SectionTitle>Building</SectionTitle>
                    </SectionHead>
                    <Row $height={30} $label={126}>
                      <RowLabel htmlFor="shared">Shared Facilities:</RowLabel>
                      <Check id="shared" type="checkbox" />
                    </Row>
                    <Field label="Building type:" />
                  </Section>
                  <Section>
                    <SectionHead>
                      <SectionTitle>Acquisition</SectionTitle>
                    </SectionHead>
                    <Field label="Purchase date:" />
                    <Field label="Purchase price:" />
                    <Field label="Property value:" />
                    <Field label="Expected rent:" />
                    <Field label="Agent" height={24} />
                    <Field label="Freeholder:" height={24} />
                    <Field label="Lease start date:" />
                    <Field label="Lease end date:" />
                  </Section>
                </div>

                <div>
                  <Section>
                    <SectionHead>
                      <SectionTitle>Mortgage</SectionTitle>
                    </SectionHead>
                    <Field label="Lender:" height={24} />
                    <Field label="Mortgage type:" />
                    <Field label="Product Type:" />
                    <Field label="Facility:" />
                    <Field label="Mortgage amount:" />
                    <Field label="Start date:" />
                    <Field label="End date:" />
                    <Field label="Current balance:" />
                    <Field label="Monthly payment:" />
                  </Section>
                  <Section>
                    <SectionHead $double>
                      <SectionTitle>
                        Guaranteed
                        <br />
                        Rent:
                      </SectionTitle>
                    </SectionHead>
                  </Section>
                  <Section>
                    <SectionHead>
                      <SectionTitle>More</SectionTitle>
                    </SectionHead>
                    <Field label="No maintenance:" height={30} />
                    <Field label="No auto emails:" />
                  </Section>
                </div>
              </Columns>
              <ScrollTrack>
                <ScrollArrow $left />
                <ScrollRail>
                  <ScrollThumb />
                </ScrollRail>
                <ScrollArrow />
              </ScrollTrack>
            </Panel>
          </Main>

          <SidePane>
            <SideHead>Notes</SideHead>
            <SideCard $height={79} />
            <SideCard $height={37} $soft />
          </SidePane>
        </Body>
      </Page>
    </>
  );
}
